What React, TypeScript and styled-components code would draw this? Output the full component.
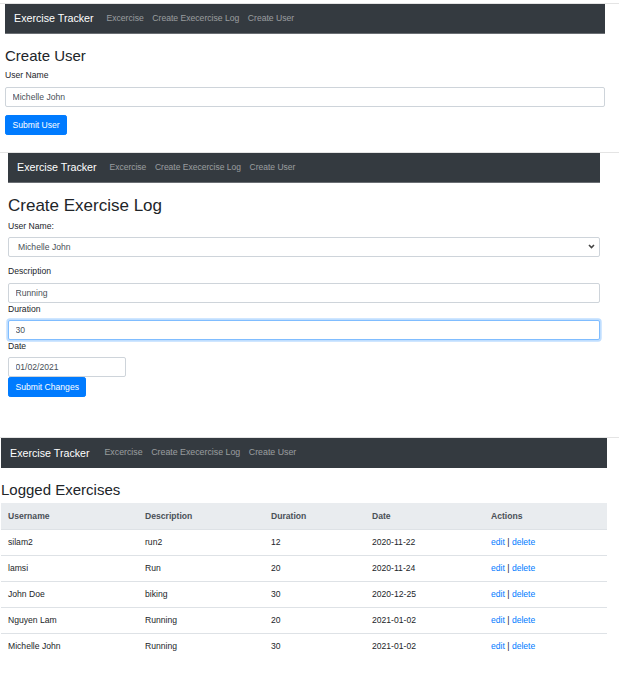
import React from "react";
import styled, { createGlobalStyle } from "styled-components";

const Global = createGlobalStyle`
  html, body { margin: 0; padding: 0; background: #fff; }
  body {
    font-family: "Liberation Sans", Arial, Helvetica, sans-serif;
    color: #212529;
    font-size: 8.6px;
    line-height: 1.5;
  }
  * { box-sizing: border-box; }
`;

const Page = styled.div`
  display: flex;
  flex-direction: column;
  width: 619px;
  padding-top: 3px;
`;

const Shot = styled.section<{ $h: number; $inset: number }>`
  height: ${(p) => p.$h}px;
  border-top: 1px solid #e4e4e4;
  padding-left: ${(p) => p.$inset}px;
  display: flex;
  flex-direction: column;
`;

const Frame = styled.div<{ $w: number }>`
  width: ${(p) => p.$w}px;
  display: flex;
  flex-direction: column;
`;

const Navbar = styled.nav<{ $edge?: boolean; $link: number; $brandGap: number }>`
  height: 30px;
  background: #343a40;
  display: flex;
  align-items: center;
  padding-left: 9px;
  border-bottom: ${(p) => (p.$edge ? "1px solid #6a6e73" : "none")};
  --link-size: ${(p) => p.$link}px;
  --brand-gap: ${(p) => p.$brandGap}px;
`;

const Brand = styled.span`
  color: #fff;
  font-size: 10.7px;
  margin-right: var(--brand-gap);
  white-space: nowrap;
`;

const NavLink = styled.span`
  color: rgba(255, 255, 255, 0.5);
  font-size: var(--link-size);
  padding: 0 4.3px;
  white-space: nowrap;
`;

const Title = styled.h3<{ $size: number; $mb: number }>`
  margin: 13px 0 ${(p) => p.$mb}px;
  font-size: ${(p) => p.$size}px;
  font-weight: 500;
  line-height: 1.2;
  color: #212529;
`;

const Group = styled.div<{ $mb: number }>`
  display: flex;
  flex-direction: column;
  margin-bottom: ${(p) => p.$mb}px;
`;

const Label = styled.label`
  display: block;
  margin-bottom: 4.3px;
  line-height: 12.9px;
  font-size: 8.6px;
  color: #212529;
`;

const Input = styled.input<{ $w?: number; $focus?: boolean }>`
  height: 20px;
  width: ${(p) => (p.$w ? `${p.$w}px` : "100%")};
  padding: 0 6.5px;
  border: 1px solid ${(p) => (p.$focus ? "#80bdff" : "#ced4da")};
  box-shadow: ${(p) => (p.$focus ? "0 0 0 1.7px rgba(0,123,255,0.25)" : "none")};
  border-radius: 2px;
  font-family: inherit;
  font-size: 8.6px;
  color: #495057;
  background: #fff;
  outline: none;
`;

const chevron =
  "url(\"data:image/svg+xml,%3Csvg xmlns='http://www.w3.org/2000/svg' width='7' height='5' viewBox='0 0 7 5'%3E%3Cpath d='M1 1l2.5 2.5L6 1' fill='none' stroke='%23444' stroke-width='1.6'/%3E%3C/svg%3E\")";

const Select = styled.select`
  appearance: none;
  height: 20px;
  width: 100%;
  padding: 0 16px 0 9px;
  border: 1px solid #ced4da;
  border-radius: 2px;
  font-family: inherit;
  font-size: 8.6px;
  color: #495057;
  background: #fff ${chevron} no-repeat right 4px center;
  outline: none;
`;

const Button = styled.button`
  align-self: flex-start;
  height: 20px;
  padding: 0 6.45px;
  border: 1px solid #007bff;
  border-radius: 2.15px;
  background: #007bff;
  color: #fff;
  font-family: inherit;
  font-size: 8.6px;
  line-height: 1;
  cursor: pointer;
`;

const cols = "137px 126px 101px 119px 1fr";

const HeadRow = styled.div`
  display: grid;
  grid-template-columns: ${cols};
  height: 26px;
  align-items: center;
  background: #e9ecef;
`;

const HeadCell = styled.div`
  padding: 0 7px;
  font-weight: 700;
  color: #495057;
  font-size: 8.6px;
`;

const Row = styled.div`
  display: grid;
  grid-template-columns: ${cols};
  height: 26px;
  align-items: center;
  border-top: 1px solid #dee2e6;
`;

const Cell = styled.div`
  padding: 0 7px;
  color: #212529;
  font-size: 8.6px;
`;

const Link = styled.a`
  color: #007bff;
  text-decoration: none;
`;

const NavItems = () => (
  <>
    <Brand>Exercise Tracker</Brand>
    <NavLink>Excercise</NavLink>
    <NavLink>Create Execercise Log</NavLink>
    <NavLink>Create User</NavLink>
  </>
);

const rows = [
  ["silam2", "run2", "12", "2020-11-22"],
  ["lamsi", "Run", "20", "2020-11-24"],
  ["John Doe", "biking", "30", "2020-12-25"],
  ["Nguyen Lam", "Running", "20", "2021-01-02"],
  ["Michelle John", "Running", "30", "2021-01-02"],
];

export default function App() {
  return (
    <>
      <Global />
      <Page>
        <Shot $h={149} $inset={5}>
          <Frame $w={600}>
            <Navbar $edge $link={8.6} $brandGap={8.6}>
              <NavItems />
            </Navbar>
            <Title $size={15} $mb={4.3}>Create User</Title>
            <Group $mb={8.6}>
              <Label>User Name</Label>
              <Input readOnly value="Michelle John" />
            </Group>
            <Button>Submit User</Button>
          </Frame>
        </Shot>

        <Shot $h={285} $inset={8}>
          <Frame $w={592}>
            <Navbar $edge $link={8.5} $brandGap={8.6}>
              <NavItems />
            </Navbar>
            <Title $size={17} $mb={3.3}>Create Exercise Log</Title>
            <Group $mb={8.6}>
              <Label>User Name:</Label>
              <Select defaultValue="Michelle John">
                <option>Michelle John</option>
              </Select>
            </Group>
            <Group $mb={0}>
              <Label>Description</Label>
              <Input readOnly value="Running" />
            </Group>
            <Group $mb={0}>
              <Label>Duration</Label>
              <Input readOnly value="30" $focus />
            </Group>
            <Group $mb={0}>
              <Label>Date</Label>
              <Input readOnly value="01/02/2021" $w={118} />
            </Group>
            <Button>Submit Changes</Button>
          </Frame>
        </Shot>

        <Shot $h={253} $inset={1}>
          <Frame $w={606}>
            <Navbar $link={8.8} $brandGap={10.6}>
              <NavItems />
            </Navbar>
            <Title $size={15} $mb={4.3}>Logged Exercises</Title>
            <HeadRow>
              <HeadCell>Username</HeadCell>
              <HeadCell>Description</HeadCell>
              <HeadCell>Duration</HeadCell>
              <HeadCell>Date</HeadCell>
              <HeadCell>Actions</HeadCell>
            </HeadRow>
            {rows.map((r, i) => (
              <Row key={i}>
                {r.map((c, j) => (
                  <Cell key={j}>{c}</Cell>
                ))}
                <Cell>
                  <Link href="#">edit</Link> | <Link href="#">delete</Link>
                </Cell>
              </Row>
            ))}
          </Frame>
        </Shot>
      </Page>
    </>
  );
}
